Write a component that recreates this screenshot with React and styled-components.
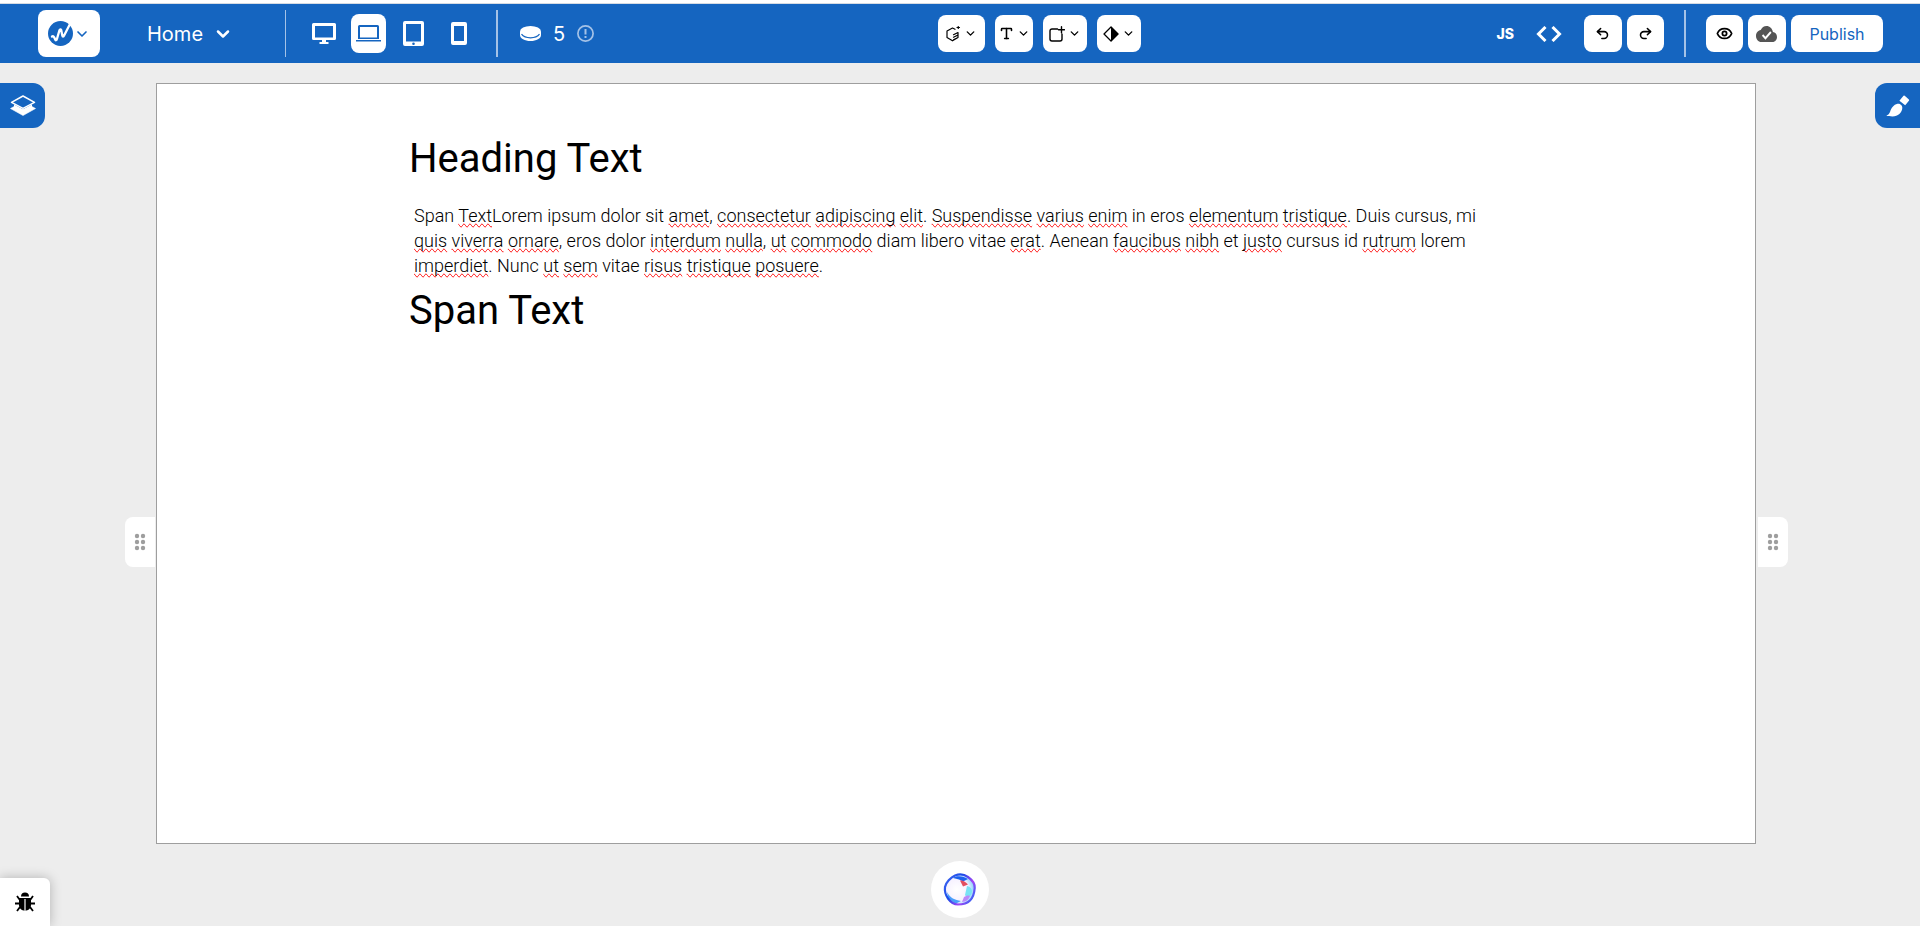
import React from 'react';
import styled, { createGlobalStyle } from 'styled-components';
import { ChevronDown, Eye, Redo2, Type, Undo2 } from 'lucide-react';

const blue = '#1565c0';
const uiFont = 'Inter, "Open Sans", sans-serif';
const contentFont = 'Roboto, "Noto Sans", sans-serif';

const GlobalStyle = createGlobalStyle`
  *, *::before, *::after { box-sizing: border-box; }
  body { margin: 0; background: #ededed; font-family: ${uiFont}; }
  button { font: inherit; color: inherit; border: 0; padding: 0; background: none; cursor: pointer; }
  svg { display: block; flex: none; }
`;

const Page = styled.div`
  min-height: 100vh;
  display: flex;
  flex-direction: column;
  border-top: 3px solid #fff;
`;

const TopBar = styled.header`
  height: 60px;
  padding: 0 37px 0 38px;
  display: flex;
  align-items: center;
  justify-content: space-between;
  background: ${blue};
  border-top: 1px solid #d5dbe3;
  color: #fff;
`;

const Group = styled.div`
  display: flex;
  align-items: center;
  gap: ${(p) => p.$gap || 0}px;
`;

const Divider = styled.span`
  width: ${(p) => p.$width || 2}px;
  height: 47px;
  background: #a4c2e7;
`;

const LogoButton = styled.button`
  width: 62px;
  height: 47px;
  border-radius: 8px;
  background: #fff;
  color: ${blue};
  display: flex;
  align-items: center;
  justify-content: center;
  gap: 1px;
`;

const PageMenu = styled.button`
  display: flex;
  align-items: center;
  justify-content: space-between;
  width: 86px;
  margin: 0 52px 0 47px;
  font-size: 20px;
  line-height: 30px;
`;

const DeviceButton = styled.button`
  width: 35px;
  height: 39px;
  border-radius: 8px;
  display: flex;
  align-items: center;
  justify-content: center;
  background: ${(p) => (p.$active ? '#fff' : 'transparent')};
  color: ${(p) => (p.$active ? blue : '#fff')};
`;

const Devices = styled(Group)`
  margin: 0 20px;
`;

const Credits = styled(Group)`
  margin-left: 22px;
  font-size: 20px;
  line-height: 30px;
`;

const ToolButton = styled.button`
  height: 37px;
  width: ${(p) => p.$width || 37}px;
  border-radius: 8px;
  display: flex;
  align-items: center;
  justify-content: center;
  gap: 3px;
  background: #fff;
  color: #000;
`;

const PlainButton = styled.button`
  height: 37px;
  padding: 0 11px;
  font-size: 14px;
  font-weight: 800;
  display: flex;
  align-items: center;
`;

const History = styled(Group)`
  margin-left: 11px;
`;

const PublishButton = styled.button`
  width: 92px;
  height: 37px;
  border-radius: 8px;
  background: #fff;
  color: ${blue};
  font-size: 16px;
`;

const Workspace = styled.main`
  flex: 1;
  display: flex;
  padding-top: 20px;
`;

const Rail = styled.aside`
  width: ${(p) => (p.$side === 'left' ? 156 : 164)}px;
  display: grid;
  grid-template-rows: auto 7fr auto 5fr;
`;

const PanelTab = styled.button`
  grid-row: 1;
  width: 45px;
  height: 45px;
  display: flex;
  align-items: center;
  justify-content: center;
  background: ${blue};
  color: #fff;
  justify-self: ${(p) => (p.$side === 'left' ? 'start' : 'end')};
  border-radius: ${(p) => (p.$side === 'left' ? '0 12px 12px 0' : '12px 0 0 12px')};
`;

const Handle = styled.button`
  grid-row: 3;
  width: 30px;
  height: 50px;
  display: flex;
  align-items: center;
  justify-content: center;
  background: #fff;
  justify-self: ${(p) => (p.$side === 'left' ? 'end' : 'start')};
  margin: ${(p) => (p.$side === 'left' ? '0 1px 0 0' : '0 0 0 2px')};
  border-radius: ${(p) => (p.$side === 'left' ? '8px 0 0 8px' : '0 8px 8px 0')};
`;

const Canvas = styled.section`
  flex: 1;
  min-width: 0;
  background: #fff;
  border: 1px solid #9e9e9e;
  padding: 50px 252px;
  color: #000;
  font-family: ${contentFont};
`;

const Heading = styled.h1`
  margin: 0;
  font-size: 40px;
  line-height: 50px;
  font-weight: 400;
`;

const Paragraph = styled.p`
  margin: 19px 0 8px;
  padding: 0 5px;
  font-size: 18px;
  line-height: 25px;
  font-weight: 300;
`;

const Line = styled.span`
  display: block;
`;

const Misspelt = styled.span`
  text-decoration-line: spelling-error;
`;

const BottomBar = styled.footer`
  height: 82px;
  display: grid;
  grid-template-columns: 1fr auto 1fr;
`;

const BugButton = styled.button`
  align-self: end;
  width: 50px;
  height: 48px;
  border-radius: 0 6px 0 0;
  background: #fff;
  box-shadow: 0 0 12px rgba(0, 0, 0, 0.25);
  display: flex;
  align-items: center;
  justify-content: center;
`;

const AssistantButton = styled.button`
  margin-top: 17px;
  width: 58px;
  height: 57px;
  border-radius: 50%;
  background: #fff;
  display: flex;
  align-items: center;
  justify-content: center;
`;

const Logo = () => (
  <svg width="25" height="25" viewBox="0 0 25 25" fill="none">
    <circle cx="12.5" cy="12.5" r="12.5" fill="currentColor" />
    <path d="M4 15.500c1.200-.8 2.200.2 3 2.500 .6 1.800 1.500 1.600 2-.3l2.500-8.500c.5-1.300 1.500-1 1.800.2l1 5c.3 1.500 1.200 1.500 1.800.1L21.500 4" stroke="#fff" strokeWidth="2.300" strokeLinecap="round" />
  </svg>
);

const Desktop = () => (
  <svg width="24" height="22" viewBox="0 0 24 22" fill="currentColor">
    <path fillRule="evenodd" d="M1.500 0h21A1.500 1.500 0 0 1 24 1.500v14a1.500 1.500 0 0 1-1.500 1.500H14v2h2.500v2h-9v-2H10v-2H1.500A1.500 1.500 0 0 1 0 15.500v-14A1.500 1.500 0 0 1 1.500 0zM3 3v11.500h18V3z" />
  </svg>
);

const Laptop = () => (
  <svg width="25" height="17" viewBox="0 0 25 17" fill="currentColor">
    <path fillRule="evenodd" d="M3.500 0h18A1.500 1.500 0 0 1 23 1.500V14H2V1.500A1.500 1.500 0 0 1 3.500 0zM4 2v10.500h17V2z" />
    <path d="M0 15h25v1.500H0z" />
  </svg>
);

const Tablet = () => (
  <svg width="21" height="25" viewBox="0 0 21 25" fill="currentColor">
    <path fillRule="evenodd" d="M2 0h17a2 2 0 0 1 2 2v21a2 2 0 0 1-2 2H2a2 2 0 0 1-2-2V2a2 2 0 0 1 2-2zM3 3v17.500h15V3zM10.500 21.500a1.300 1.300 0 1 0 0 2.600 1.300 1.300 0 0 0 0-2.600z" />
  </svg>
);

const Phone = () => (
  <svg width="16" height="23" viewBox="0 0 16 23" fill="currentColor">
    <path fillRule="evenodd" d="M2 0h12a2 2 0 0 1 2 2v19a2 2 0 0 1-2 2H2a2 2 0 0 1-2-2V2a2 2 0 0 1 2-2zM3 4v15h10V4z" />
  </svg>
);

const Coin = () => (
  <svg width="21" height="15" viewBox="0 0 21 15" fill="currentColor">
    <path d="M0 6v3c0 3.500 4.700 6 10.500 6S21 12.500 21 9V6z" />
    <ellipse cx="10.500" cy="5.500" rx="10.500" ry="5.500" />
    <path d="M1.500 8.200c2 2.600 5.300 3.600 9 3.600s7-1 9-3.600" fill="none" stroke={blue} strokeWidth="1.200" />
  </svg>
);

const Info = () => (
  <svg width="17" height="17" viewBox="0 0 17 17" fill="none" stroke="#a4c2e7" strokeWidth="1.700">
    <circle cx="8.500" cy="8.500" r="7.600" />
    <path d="M8.500 4v5.500M8.500 11v2" strokeWidth="2" />
  </svg>
);

const Box = () => (
  <svg width="15" height="16" viewBox="0 0 15 16" fill="none" stroke="currentColor" strokeWidth="1.200" strokeLinejoin="round" strokeLinecap="round">
    <path d="M9 3.300 6.500 2 1 5v6.500l5.500 3.300 5.500-3.300V6.500L7.500 8.700M12 9 7.500 11.200M12 11.500l-4.500 2.200M11 1.500h2.500" />
    <path d="M12.300.6v1.800" />
  </svg>
);

const AddFrame = () => (
  <svg width="16" height="16" viewBox="0 0 16 16" fill="none" stroke="currentColor" strokeWidth="1.400" strokeLinecap="round">
    <path d="M8.500 3H3a2 2 0 0 0-2 2v8a2 2 0 0 0 2 2h8a2 2 0 0 0 2-2V8M12.500.7v6M9.500 3.700h6" />
  </svg>
);

const Contrast = () => (
  <svg width="16" height="16" viewBox="0 0 16 16">
    <path d="M8 1l7 7-7 7-7-7z" fill="none" stroke="currentColor" strokeWidth="1.300" strokeLinejoin="round" />
    <path d="M8 .5 15.500 8 8 15.500z" fill="currentColor" />
  </svg>
);

const Code = () => (
  <svg width="26" height="16" viewBox="0 0 26 16" fill="none" stroke="currentColor" strokeWidth="3">
    <path d="M9.500 1 2.500 8l7 7M16.500 1l7 7-7 7" />
  </svg>
);

const Cloud = () => (
  <svg width="21" height="16" viewBox="0 4 24 16" preserveAspectRatio="none">
    <path d="M19.350 10.040C18.670 6.590 15.640 4 12 4 9.110 4 6.600 5.640 5.350 8.040 2.340 8.360 0 10.910 0 14c0 3.310 2.690 6 6 6h13c2.760 0 5-2.240 5-5 0-2.640-2.050-4.780-4.650-4.960z" fill="#555" />
    <path d="M7.500 13l3.300 3.300L17 10" fill="none" stroke="#fff" strokeWidth="2.200" />
  </svg>
);

const Layers = () => (
  <svg width="26" height="21" viewBox="0 0 26 21" fill="none">
    <path d="M.5 13.500 5 11l8 4.300L21 11l4.500 2.500L13 20.500z" fill="currentColor" stroke="currentColor" strokeLinejoin="round" strokeWidth=".6" />
    <path d="M4 9.500 13 14.300 22 9.500V12L13 17 4 12z" fill="currentColor" />
    <path d="M13 1 24.500 7.300 13 13.300 1.500 7.300z" fill={blue} stroke="currentColor" strokeWidth="1.500" strokeLinejoin="round" />
  </svg>
);

const Brush = () => (
  <svg width="24" height="22" viewBox="0 0 24 22" fill="currentColor">
    <path d="M17.500.8a1 1 0 0 1 1.200 0l4.200 3.700a1 1 0 0 1 0 1.300l-3.700 4.400-5.800-4.400z" />
    <path d="M11.500 8.800c2.300-.5 5 1.300 4.800 4.200C16 17.500 12 21.500 6.500 21.500c-2.500 0-4.800-.2-6.200-.9 2-.8 3-1.600 3.900-4.100 1-3.200 3.500-7 7.300-7.700z" />
  </svg>
);

const Dots = () => (
  <svg width="12" height="18" viewBox="0 0 12 18" fill="#9e9e9e">
    {[3, 9].map((x) => [3, 9, 15].map((y) => <circle key={`${x}-${y}`} cx={x} cy={y} r="2.200" />))}
  </svg>
);

const Bug = () => (
  <svg width="20" height="20" viewBox="0 0 20 20">
    <path d="M6 4.500C6 2 7.500.5 10 .5s4 1.500 4 4z" />
    <path d="M4 6h12v7c0 3.500-2.500 5.500-6 5.500S4 16.500 4 13z" />
    <path d="M4.500 7.500 2 4M15.500 7.500 18 4M4 11.500H0M16 11.500h4M5 15l-3 4M15 15l3 4" stroke="#000" strokeWidth="1.800" />
    <path d="M10 7v12" stroke="#bbb" strokeWidth="1.600" />
  </svg>
);

const Orb = () => (
  <svg width="34" height="34" viewBox="0 0 34 34">
    <defs>
      <linearGradient id="rim" x1="0" y1="0.2" x2="1" y2="0.8">
        <stop offset="0" stopColor="#3a62f0" />
        <stop offset=".35" stopColor="#1c4be8" />
        <stop offset=".7" stopColor="#a544f5" />
        <stop offset="1" stopColor="#2d63f5" />
      </linearGradient>
      <radialGradient id="core" cx=".4" cy=".5" r=".6">
        <stop offset="0" stopColor="#fff" />
        <stop offset=".65" stopColor="#f6f1ff" />
        <stop offset="1" stopColor="#7fcffb" />
      </radialGradient>
      <filter id="soft" x="-20%" y="-20%" width="140%" height="140%">
        <feGaussianBlur stdDeviation=".6" />
      </filter>
    </defs>
    <g filter="url(#soft)">
      <path d="M12 2.500c4-1.500 9-1.300 13 1.500s7 6.500 6.700 11-1.200 9-4.700 12.500-8 4-12 4S7.500 29 5 25.500 1.500 18 2 14 8 4 12 2.500z" fill="url(#core)" />
      <path d="M10 5c3-3 11-2 15 1l-5 2.500-4-2z" fill="#1f62ee" />
      <path d="M17 7.500c3-.5 6 1.500 8 4l-5 2z" fill="#e2505f" />
      <path d="M24 13c5 1 6 5 4 9-2 2-5 2-6 0z" fill="#79e3f4" />
      <path d="M4 19c3 6 8 8 14 9l-6 3-7-6z" fill="#4a9ffa" />
      <path d="M21 24c2-1 4-2 6-1-1 3-4 6-8 6z" fill="#b989fb" />
      <path d="M12 2.500c4-1.500 9-1.300 13 1.500s7 6.500 6.700 11-1.200 9-4.700 12.500-8 4-12 4S7.500 29 5 25.500 1.500 18 2 14 8 4 12 2.500z" fill="none" stroke="url(#rim)" strokeWidth="2.200" />
    </g>
  </svg>
);

const devices = [
  ['Desktop', Desktop],
  ['Laptop', Laptop],
  ['Tablet', Tablet],
  ['Phone', Phone],
];

const tools = [
  ['Add component', <Box />, 47],
  ['Add text', <Type size={15} strokeWidth={2.5} />, 38],
  ['Add frame', <AddFrame />, 44],
  ['Theme', <Contrast />, 44],
];

/* Words between asterisks are flagged by the spelling checker. */
const paragraph = [
  'Span *Text*Lorem ipsum dolor sit *amet*, *consectetur* *adipiscing* *elit*. *Suspendisse* *varius* *enim* in eros *elementum* *tristique*. Duis cursus, mi',
  '*quis* *viverra* *ornare*, eros dolor *interdum* *nulla*, *ut* *commodo* diam libero vitae *erat*. Aenean *faucibus* *nibh* et *justo* cursus id *rutrum* lorem',
  '*imperdiet*. Nunc *ut* *sem* vitae *risus* *tristique* *posuere*.',
];

const checked = (text) =>
  text.split('*').map((part, i) => (i % 2 ? <Misspelt key={i}>{part}</Misspelt> : part));

export default function App() {
  return (
    <Page>
      <GlobalStyle />
      <TopBar>
        <Group>
          <LogoButton aria-label="Main menu">
            <Logo />
            <ChevronDown size={16} strokeWidth={2.5} />
          </LogoButton>
          <PageMenu>
            Home
            <ChevronDown size={20} strokeWidth={3} />
          </PageMenu>
          <Divider $width={1} />
          <Devices $gap={10}>
            {devices.map(([name, Icon]) => (
              <DeviceButton key={name} aria-label={name} $active={name === 'Laptop'}>
                <Icon />
              </DeviceButton>
            ))}
          </Devices>
          <Divider />
          <Credits $gap={12}>
            <Coin />
            <span>5</span>
            <Info />
          </Credits>
        </Group>

        <Group $gap={10}>
          {tools.map(([name, icon, width]) => (
            <ToolButton key={name} aria-label={name} $width={width}>
              {icon}
              <ChevronDown size={13} strokeWidth={2.5} />
            </ToolButton>
          ))}
        </Group>

        <Group $gap={20}>
          <Group>
            <PlainButton>JS</PlainButton>
            <PlainButton aria-label="Code"><Code /></PlainButton>
            <History $gap={5}>
              <ToolButton aria-label="Undo" $width={38}><Undo2 size={15} strokeWidth={2.5} /></ToolButton>
              <ToolButton aria-label="Redo"><Redo2 size={15} strokeWidth={2.5} /></ToolButton>
            </History>
          </Group>
          <Divider />
          <Group $gap={5}>
            <ToolButton aria-label="Preview"><Eye size={17} strokeWidth={2.5} /></ToolButton>
            <ToolButton aria-label="Saved" $width={38}><Cloud /></ToolButton>
            <PublishButton>Publish</PublishButton>
          </Group>
        </Group>
      </TopBar>

      <Workspace>
        <Rail $side="left">
          <PanelTab aria-label="Layers" $side="left"><Layers /></PanelTab>
          <Handle aria-label="Resize from left" $side="left"><Dots /></Handle>
        </Rail>
        <Canvas>
          <Heading>Heading Text</Heading>
          <Paragraph>
            {paragraph.map((line) => <Line key={line}>{checked(line)}</Line>)}
          </Paragraph>
          <Heading as="h2">Span Text</Heading>
        </Canvas>
        <Rail $side="right">
          <PanelTab aria-label="Styles" $side="right"><Brush /></PanelTab>
          <Handle aria-label="Resize from right" $side="right"><Dots /></Handle>
        </Rail>
      </Workspace>

      <BottomBar>
        <BugButton aria-label="Report a bug"><Bug /></BugButton>
        <AssistantButton aria-label="Assistant"><Orb /></AssistantButton>
      </BottomBar>
    </Page>
  );
}
